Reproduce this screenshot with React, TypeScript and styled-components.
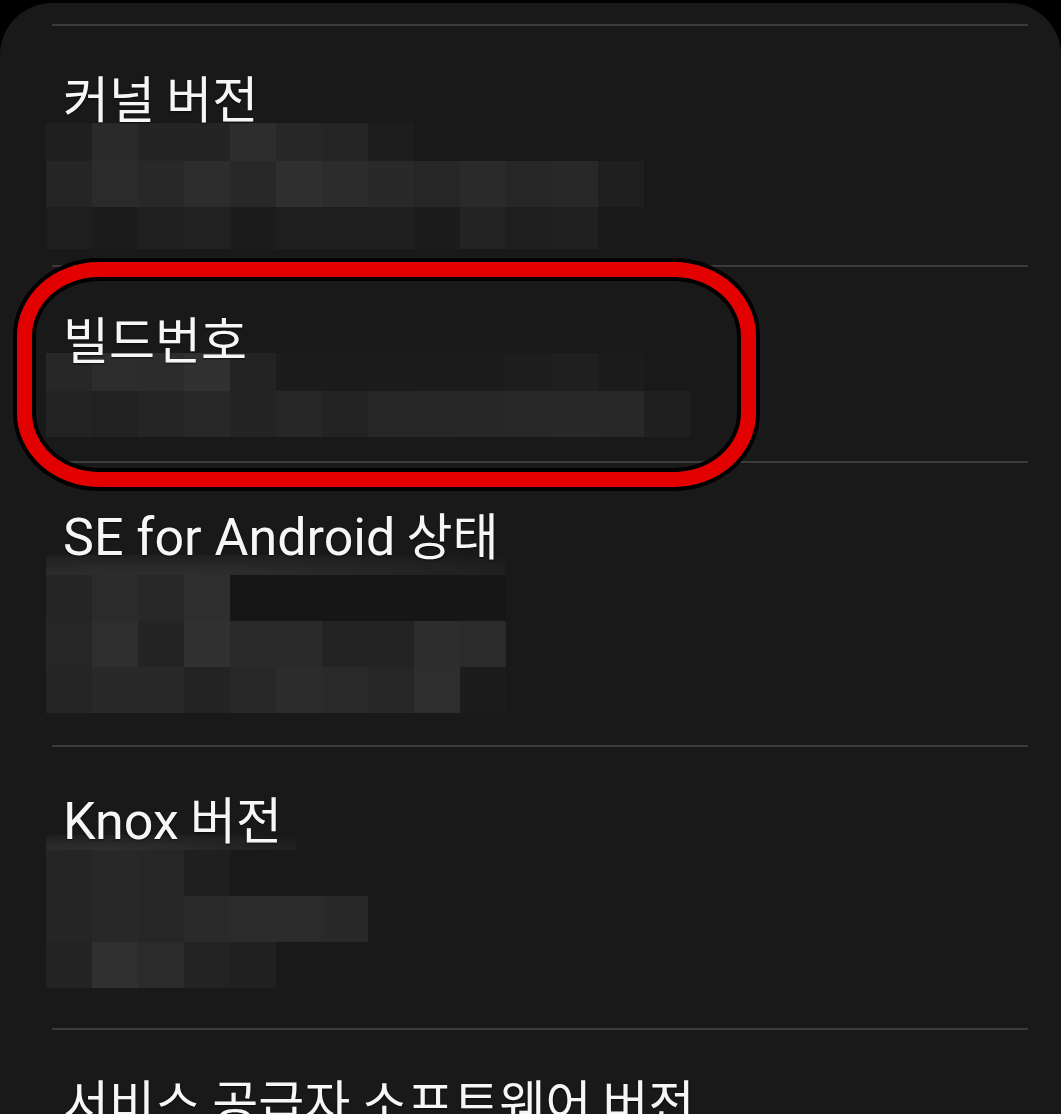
import React from "react";
import styled, { createGlobalStyle } from "styled-components";

const GlobalStyle = createGlobalStyle`
    html, body {
        margin: 0;
        padding: 0;
        height: 100%;
        overflow: hidden;
        background: #000;
    }
`;

const Panel = styled.div`
    margin-top: 3px;
    min-height: 1200px;
    padding-top: 21px;
    background-color: #191919;
    border-radius: 52px 52px 0 0;
    font-family: "Noto Sans CJK KR", Roboto, sans-serif;
    color: #f6f6f6;
`;

const Divider = styled.div`
    height: 2px;
    margin: 0 33px 0 52px;
    background-color: #3b3b3b;
`;

const Item = styled.div<{ $bottom: number }>`
    position: relative;
    display: flex;
    flex-direction: column;
    padding: 46px 0 ${p => p.$bottom}px 46px;
`;

const Title = styled.div`
    height: 48px;
    margin-left: 17px;
    font-size: 50px;
    line-height: 48px;
    white-space: nowrap;
    position: relative;
    z-index: 1;
    text-shadow: 0 1px 2px rgba(0, 0, 0, 0.6);
`;

const Latin = styled.span`
    font-family: Roboto, sans-serif;
    font-size: 52px;
    line-height: 40px;
`;

const Mosaic = styled.div<{ $offset: number }>`
    display: flex;
    flex-direction: column;
    align-items: flex-start;
    margin-top: ${p => p.$offset}px;
    filter: blur(0.6px);
`;

const Strip = styled.div<{ $width: number; $height: number }>`
    width: ${p => p.$width}px;
    height: ${p => p.$height}px;
    background: radial-gradient(ellipse at 25% 100%, rgba(255, 255, 255, 0.1), rgba(255, 255, 255, 0.03) 70%, transparent);
`;

const Row = styled.div<{ $height: number }>`
    display: flex;
    height: ${p => p.$height}px;
`;

const Cell = styled.div<{ $shade: string }>`
    width: 46px;
    height: 100%;
    background-color: #${p => p.$shade};
`;

const Highlight = styled.div`
    position: absolute;
    top: -5px;
    left: 17px;
    width: 739px;
    height: 225px;
    box-sizing: border-box;
    border: 15px solid #e30000;
    border-radius: 82px / 74px;
    box-shadow: 0 0 0 4px #000, inset 0 0 0 4px #000;
    pointer-events: none;
`;

type MosaicData = {
    offset: number;
    strip?: { width: number; height: number };
    rows: { height: number; cells: string[] }[];
};

type Entry = {
    label: string;
    bottom: number;
    mosaic?: MosaicData;
    highlight?: boolean;
};

const entries: Entry[] = [
    {
        label: "커널 버전",
        bottom: 16,
        mosaic: {
            offset: 3,
            rows: [
                { height: 38, cells: ["1f1f1f", "2a2a2a", "242424", "242424", "2d2d2d", "272727", "252525", "1d1d1d"] },
                {
                    height: 46,
                    cells: ["252525", "2b2b2b", "282828", "2d2d2d", "282828", "2f2f2f", "2c2c2c", "292929", "262626", "2a2a2a", "262626", "282828", "1f1f1f"],
                },
                {
                    height: 42,
                    cells: ["1e1e1e", "1b1b1b", "202020", "212121", "1c1c1c", "1f1f1f", "1e1e1e", "1f1f1f", "1c1c1c", "232323", "1e1e1e", "202020"],
                },
            ],
        },
    },
    {
        label: "빌드번호",
        bottom: 24,
        highlight: true,
        mosaic: {
            offset: -8,
            rows: [
                {
                    height: 38,
                    cells: ["272727", "2d2d2d", "2c2c2c", "313131", "232323", "1c1c1c", "1b1b1b", "1c1c1c", "1b1b1b", "1c1c1c", "1d1d1d", "1f1f1f", "1c1c1c"],
                },
                {
                    height: 46,
                    cells: ["232323", "212121", "252525", "282828", "242424", "272727", "232323", "262626", "262626", "272727", "282828", "292929", "282828", "1f1f1f"],
                },
            ],
        },
    },
    {
        label: "SE for Android 상태",
        bottom: 32,
        mosaic: {
            offset: -2,
            strip: { width: 460, height: 20 },
            rows: [
                { height: 46, cells: ["252525", "2b2b2b", "282828", "2e2e2e", "161616", "161616", "161616", "161616", "161616", "161616"] },
                { height: 46, cells: ["262626", "2e2e2e", "242424", "313131", "2a2a2a", "2a2a2a", "232323", "232323", "2d2d2d", "2b2b2b"] },
                { height: 46, cells: ["252525", "292929", "292929", "232323", "282828", "2c2c2c", "2a2a2a", "262626", "2e2e2e", "1c1c1c"] },
            ],
        },
    },
    {
        label: "Knox 버전",
        bottom: 40,
        mosaic: {
            offset: -6,
            strip: { width: 250, height: 15 },
            rows: [
                { height: 46, cells: ["252525", "282828", "262626", "1f1f1f"] },
                { height: 46, cells: ["252525", "282828", "262626", "2a2a2a", "2c2c2c", "2b2b2b", "292929"] },
                { height: 46, cells: ["232323", "303030", "2b2b2b", "232323", "202020"] },
            ],
        },
    },
    { label: "서비스 공급자 소프트웨어 버전", bottom: 0 },
];

const renderLabel = (label: string) =>
    label
        .split(/([A-Za-z]+(?: [A-Za-z]+)*)/)
        .filter(part => part.length > 0)
        .map((part, i) => (/[A-Za-z]/.test(part) ? <Latin key={i}>{part}</Latin> : part));

export default function App() {
    return (
        <>
            <GlobalStyle />
            <Panel>
                {entries.map((entry, index) => (
                    <React.Fragment key={index}>
                        <Divider />
                        <Item $bottom={entry.bottom}>
                            {entry.highlight ? <Highlight /> : null}
                            <Title>{renderLabel(entry.label)}</Title>
                            {entry.mosaic ? (
                                <Mosaic $offset={entry.mosaic.offset}>
                                    {entry.mosaic.strip ? (
                                        <Strip $width={entry.mosaic.strip.width} $height={entry.mosaic.strip.height} />
                                    ) : null}
                                    {entry.mosaic.rows.map((row, r) => (
                                        <Row key={r} $height={row.height}>
                                            {row.cells.map((shade, c) => (
                                                <Cell key={c} $shade={shade} />
                                            ))}
                                        </Row>
                                    ))}
                                </Mosaic>
                            ) : null}
                        </Item>
                    </React.Fragment>
                ))}
            </Panel>
        </>
    );
}
